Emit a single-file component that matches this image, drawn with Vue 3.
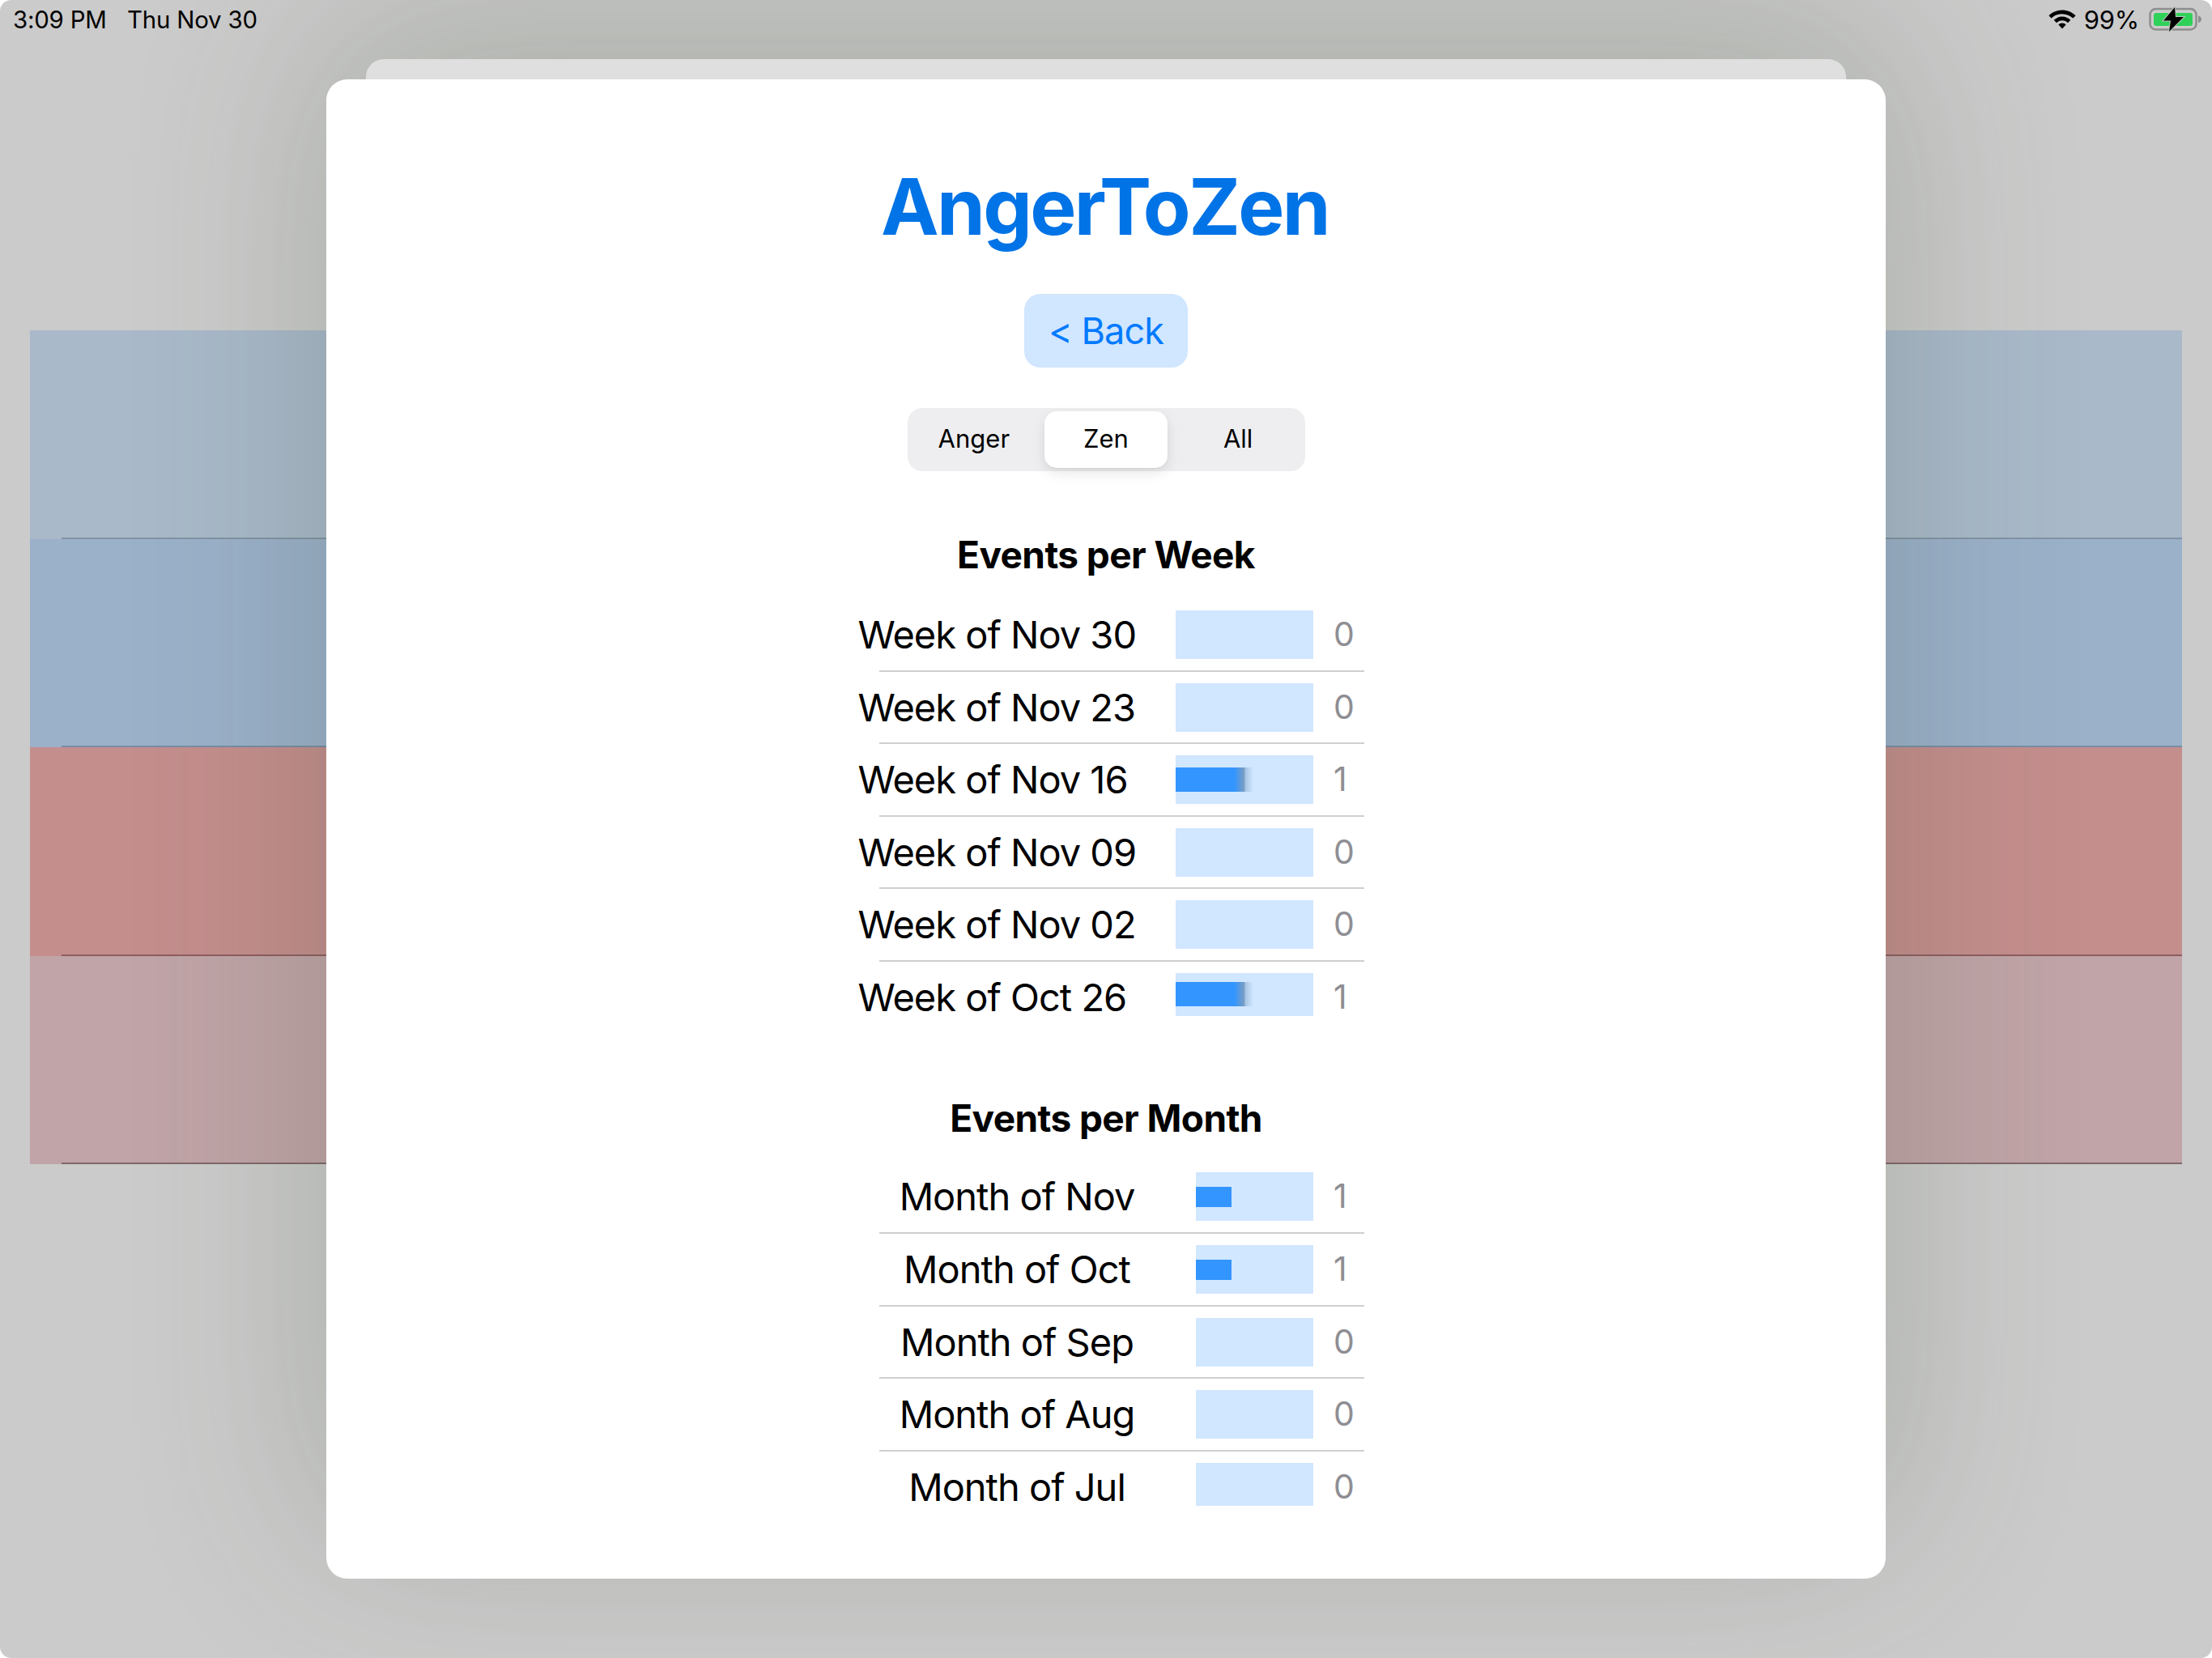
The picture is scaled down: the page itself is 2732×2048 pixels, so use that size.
<script setup>
const weeks = [
  { label: 'Week of Nov 30', value: 0 },
  { label: 'Week of Nov 23', value: 0 },
  { label: 'Week of Nov 16', value: 1 },
  { label: 'Week of Nov 09', value: 0 },
  { label: 'Week of Nov 02', value: 0 },
  { label: 'Week of Oct 26', value: 1 },
]
const months = [
  { label: 'Month of Nov', value: 1 },
  { label: 'Month of Oct', value: 1 },
  { label: 'Month of Sep', value: 0 },
  { label: 'Month of Aug', value: 0 },
  { label: 'Month of Jul', value: 0 },
]
const bands = ['band-a', 'band-b', 'band-c', 'band-d']
</script>

<template>
  <div class="screen">
    <header class="status">
      <div class="status-left">
        <span>3:09 PM</span>
        <span>Thu Nov 30</span>
      </div>
      <div class="status-right">
        <svg class="wifi" viewBox="0 0 34 24" aria-hidden="true">
          <path d="M17 0.5C23.4 0.5 29.2 3 33.6 7.2L30.4 10.6C26.9 7.3 22.2 5.2 17 5.2C11.8 5.2 7.1 7.3 3.6 10.6L0.4 7.2C4.8 3 10.6 0.5 17 0.5Z" />
          <path d="M17 8.6C21 8.6 24.6 10.2 27.3 12.8L24 16.2C22.2 14.5 19.7 13.3 17 13.3C14.3 13.3 11.8 14.5 10 16.2L6.7 12.8C9.4 10.2 13 8.6 17 8.6Z" />
          <path d="M17 16.6C18.8 16.6 20.4 17.3 21.6 18.5L17 23.4L12.4 18.5C13.6 17.3 15.2 16.6 17 16.6Z" />
        </svg>
        <span class="pct">99%</span>
        <svg class="battery" viewBox="0 0 66 32" aria-hidden="true">
          <rect x="1.500" y="3" width="57" height="25.500" rx="7" fill="none" stroke="#8e8e8e" stroke-width="2.500" />
          <rect x="6" y="8" width="48" height="16" rx="3" fill="#30d158" />
          <path d="M61 11.500C63.500 12 65 13.500 65 15.800C65 18 63.500 19.500 61 20Z" fill="#8e8e8e" />
          <path d="M32 1L18 17.500H27L25 31L43 13H33Z" fill="#000" stroke="#bfc4bf" stroke-width="2" paint-order="stroke" />
        </svg>
      </div>
    </header>

    <div class="bands">
      <div v-for="b in bands" :key="b" class="band" :class="b"></div>
    </div>

    <div class="sheet-back"></div>

    <main class="card">
      <h1 class="title">AngerToZen</h1>
      <button class="back">&lt; Back</button>
      <div class="segments">
        <div class="seg seg-side">Anger</div>
        <div class="seg seg-on">Zen</div>
        <div class="seg seg-side">All</div>
      </div>

      <h2 class="heading heading-week">Events per Week</h2>
      <section class="list list-week">
        <div v-for="w in weeks" :key="w.label" class="row">
          <span class="label">{{ w.label }}</span>
          <div class="track">
            <div v-if="w.value" class="fill"></div>
          </div>
          <span class="count">{{ w.value }}</span>
        </div>
      </section>

      <h2 class="heading heading-month">Events per Month</h2>
      <section class="list list-month">
        <div v-for="m in months" :key="m.label" class="row">
          <span class="label">{{ m.label }}</span>
          <div class="track">
            <div v-if="m.value" class="fill"></div>
          </div>
          <span class="count">{{ m.value }}</span>
        </div>
      </section>
    </main>
  </div>
</template>

<style>
html, body { margin: 0; background: #ffffff; }
</style>

<style scoped>
.screen {
  position: relative;
  width: 2732px;
  height: 2048px;
  overflow: hidden;
  background: #cbcbcb;
  border-radius: 14px;
  font-family: Inter, "Liberation Sans", sans-serif;
  color: #000;
}
.status {
  height: 48px;
  display: flex;
  justify-content: space-between;
  align-items: center;
  font-size: 29.400px;
  letter-spacing: -0.2px;
}
.status-left {
  display: flex;
  gap: 25.500px;
  padding-left: 16px;
}
.status-right {
  display: flex;
  align-items: center;
  padding-right: 12px;
}
.wifi { width: 34px; height: 24px; fill: #000; }
.pct { margin-left: 10px; font-size: 31px; }
.battery { width: 66px; height: 32px; margin-left: 12px; }

.bands {
  padding: 360px 37px 0;
}
.band { height: 257.500px; border-bottom: 2px solid transparent; box-sizing: border-box; }
.band-a { background: #a9b9ca; border-image: linear-gradient(90deg, transparent 1.500%, rgba(40,60,80,.3) 1.500%) 1; }
.band-b { background: #9bb1ca; border-image: linear-gradient(90deg, transparent 1.500%, rgba(40,60,80,.3) 1.500%) 1; }
.band-c { background: #c48e8d; border-image: linear-gradient(90deg, transparent 1.500%, rgba(60,20,30,.4) 1.500%) 1; }
.band-d { background: #c0a4a7; border-image: linear-gradient(90deg, transparent 1.500%, rgba(50,30,30,.45) 1.500%) 1; }

.sheet-back {
  position: absolute;
  left: 452px;
  top: 73px;
  width: 1828px;
  height: 1754px;
  background: #dfdfdf;
  border-radius: 22px 22px 0 0;
  box-shadow: 0 14px 240px 49px rgba(60, 75, 45, 0.24);
}
.card {
  position: absolute;
  left: 403px;
  top: 98px;
  width: 1926px;
  height: 1852px;
  background: #fff;
  border-radius: 26px;
  display: flex;
  flex-direction: column;
  align-items: center;
}
.title {
  margin: 103px 3px 0 0;
  font-size: 96px;
  line-height: 108px;
  font-weight: 700;
  letter-spacing: -2.600px;
  color: #0073e6;
}
.back {
  margin-top: 54px;
  width: 202px;
  height: 91px;
  border: 0;
  padding: 0;
  border-radius: 20px;
  background: #d1e6ff;
  color: #007aff;
  font: 400 45px/91px Inter, "Liberation Sans", sans-serif;
  letter-spacing: -0.9px;
}
.segments {
  margin-top: 50px;
  width: 491px;
  height: 78px;
  box-sizing: border-box;
  padding: 4px;
  display: flex;
  gap: 9px;
  background: #eeeef0;
  border-radius: 18px;
  font-size: 31px;
  font-weight: 400;
}
.seg {
  display: flex;
  align-items: center;
  justify-content: center;
  box-sizing: border-box;
  padding-bottom: 3px;
  border-radius: 15px;
}
.seg-side { width: 157px; }
.seg-on {
  width: 152px;
  background: #fff;
  box-shadow: 0 6px 16px rgba(0, 0, 0, 0.1), 0 1px 2px rgba(0, 0, 0, 0.05);
}
.heading {
  margin: 0;
  font-size: 46px;
  line-height: 56px;
  font-weight: 700;
  letter-spacing: -0.6px;
}
.heading-week { margin-top: 75px; }
.heading-month { margin-top: 97px; }
.list {
  width: 624px;
  align-self: flex-start;
  margin-left: 658px;
}
.list-week { margin-top: 29px; }
.list-month { margin-top: 27.500px; }
.row {
  display: flex;
  align-items: flex-start;
  height: 89.600px;
  box-sizing: border-box;
  padding-top: 12px;
  position: relative;
  font-size: 47px;
  letter-spacing: -1px;
}
.row::after {
  content: "";
  position: absolute;
  left: 25px;
  right: 0;
  top: 85.500px;
  height: 2px;
  background: #cfcfd2;
}
.row:last-child::after { display: none; }
.row:last-child { height: 66px; }
.label {
  height: 60px;
  line-height: 60px;
  white-space: nowrap;
}
.list-week .label { width: 392.500px; margin-left: -1.500px; }
.list-month .label {
  width: 340px;
  margin-left: 25px;
  margin-right: 51px;
  text-align: center;
}
.track {
  height: 60px;
  background: #d1e6ff;
  display: flex;
  align-items: center;
}
.row:last-child .track { height: 53px; }
.list-week .track { width: 170px; }
.list-month .track { width: 145px; }
.fill {
  background: #3395ff;
}
.list-week .fill {
  width: 96px;
  height: 30px;
  background: linear-gradient(90deg, #3395ff 0, #3395ff 76%, #7a9ec2 88%, #a8c6e6 90%, #d1e6ff 100%);
}
.list-month .fill {
  width: 44px;
  height: 25px;
}
.count {
  margin-left: 25px;
  height: 58px;
  line-height: 58px;
  font-size: 41px;
  letter-spacing: 0;
  color: #8e8e93;
}
</style>
